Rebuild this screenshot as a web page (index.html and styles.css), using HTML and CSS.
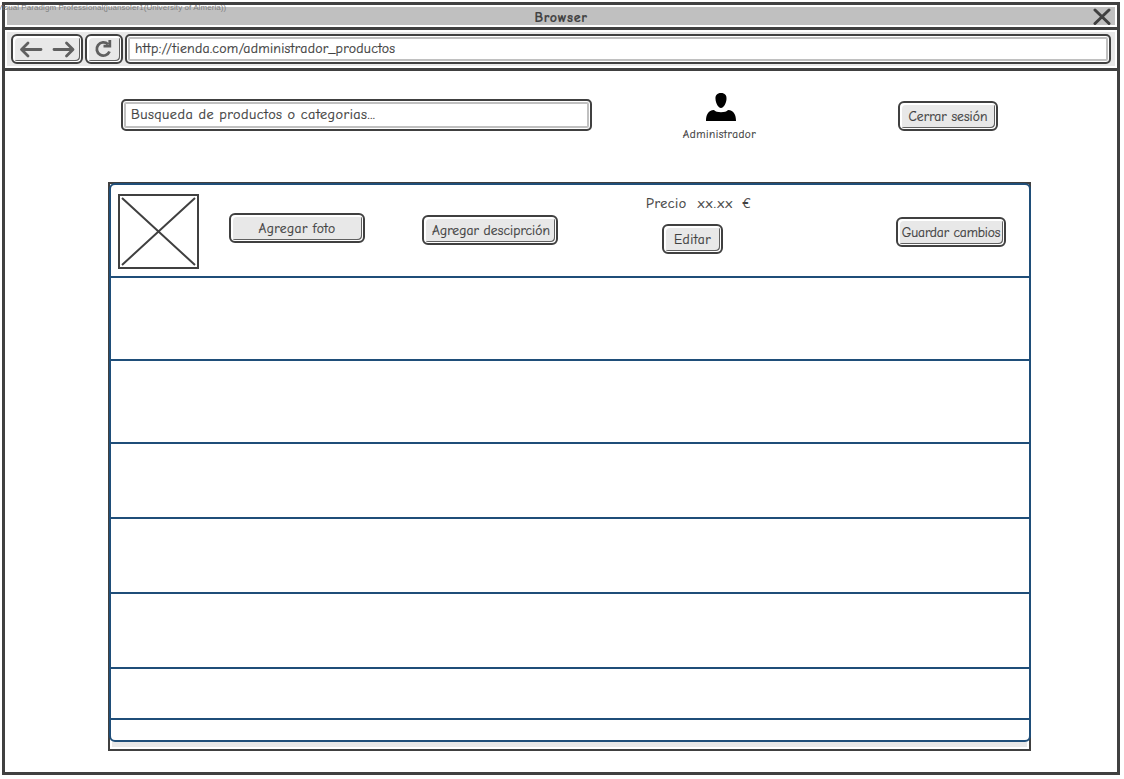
FILE: index.html
```
<!DOCTYPE html>
<html lang="es">
<head>
<meta charset="utf-8">
<title>Administrador de productos</title>
<link rel="stylesheet" href="styles.css">
</head>
<body>
<div class="watermark">Visual Paradigm Professional(juansoler1(University of Almeria))</div>
<div class="window">
  <header class="titlebar"><span class="title">Browser</span>
    <svg class="close" width="18" height="18" viewBox="0 0 18 18"><path d="M2 2L16 15.500M16 2L2 15.500"/></svg>
  </header>
  <nav class="toolbar">
    <div class="button nav">
      <svg width="68" height="26" viewBox="0 0 68 26"><path d="M28 13.500H9M15 7L8.500 13.500L15 20M41 13.500H59M53.500 7L60 13.500L53.500 20"/></svg>
    </div>
    <div class="button reload">
      <svg width="34" height="26" viewBox="0 0 34 26"><path d="M21 8.300A6.600 6.600 0 1 0 22.500 15.500M22.800 4V10.200H16.500"/></svg>
    </div>
    <div class="field url"><span class="t-url">http://tienda.com/administrador_productos</span></div>
  </nav>
  <main>
    <section class="top">
      <div class="field search"><span class="t-search">Busqueda de productos o categorias...</span></div>
      <div class="user">
        <svg width="30" height="29" viewBox="0 0 30 29"><path d="M15 0C11 0 9.200 2.500 9.500 6C9.700 10.500 12.500 15 15 15S20.300 10.500 20.500 6C20.800 2.500 19 0 15 0Z"/><path d="M0 28C0 22 2 17.500 8 17C10 20 20 20 22 17C28 17.500 30 22 30 28Z"/></svg>
        <span class="t-admin">Administrador</span>
      </div>
      <div class="button logout"><span class="t-logout">Cerrar sesión</span></div>
    </section>
    <section class="panel">
      <div class="table">
        <div class="row product">
          <svg class="photo" width="81" height="75" viewBox="0 0 81 75"><path d="M1 1H80V74H1Z"/><path d="M4 4L77 71M77 4L4 71"/></svg>
          <div class="button add-photo"><span class="t-photo">Agregar foto</span></div>
          <div class="button add-desc"><span class="t-desc">Agregar desciprción</span></div>
          <div class="price">
            <div class="amount"><span class="t-price">Precio</span><span class="t-value">xx.xx</span><span class="t-euro">€</span></div>
            <div class="button edit"><span class="t-edit">Editar</span></div>
          </div>
          <div class="button save"><span class="t-save">Guardar cambios</span></div>
        </div>
        <div class="row tall"></div>
        <div class="row tall"></div>
        <div class="row"></div>
        <div class="row"></div>
        <div class="row"></div>
        <div class="row short"></div>
        <div class="row last"></div>
      </div>
      <div class="scroll"></div>
    </section>
  </main>
</div>
</body>
</html>
```
FILE: styles.css
```
* { box-sizing: border-box; }
body { margin: 0; width: 1124px; height: 779px; overflow: hidden; background: #fff; color: #404040; font: 13.5px/20px "Comic Sans MS", "Comic Neue", "Open Sans", sans-serif; padding: 2px; }
svg { display: block; fill: none; stroke: #404040; flex: none; }
span { white-space: nowrap; -webkit-text-stroke: 0.2px #404040; }
.watermark { position: absolute; left: -3px; top: 2px; z-index: 2; color: #808080; font: 8px/11px "Liberation Sans", Arial, sans-serif; white-space: nowrap; letter-spacing: 0.07px; }
.window { width: 1118px; height: 773px; border: 3px solid #404040; }
.titlebar { display: flex; align-items: center; justify-content: center; height: 25px; border-bottom: 3px solid #404040; background: #c0c0c0; box-shadow: inset 0 0 0 2px #fff; padding: 2px 6px 0; }
.titlebar::before { content: ""; width: 18px; }
.title { font-size: 14px; font-weight: 700; margin: 2px 0 0 auto; letter-spacing: 0.65px; }
.close { margin-left: auto; margin-right: 0; stroke-width: 3; stroke-linecap: round; }
.toolbar { display: flex; gap: 2px; height: 41px; border-bottom: 3px solid #404040; background: #e8e8e8; box-shadow: inset 0 0 0 2px #fff; padding: 4px 6px; }
.button { display: flex; align-items: center; justify-content: center; flex: none; height: 30px; border: 2px solid #404040; border-radius: 6px; background: #e8e8e8; box-shadow: inset 0 0 0 1px #fff, inset -1px -1px #fff, inset -2px -2px #606060, inset 2px 2px #fff; }
.nav { width: 72px; }
.reload { width: 38px; }
.nav svg, .reload svg { stroke: #606060; stroke-width: 2.8; stroke-linecap: round; stroke-linejoin: round; }
.reload svg { stroke-linecap: butt; stroke-linejoin: miter; }
.field { display: flex; align-items: center; flex: none; background: #fff; border: 2px solid #404040; border-radius: 5px; box-shadow: inset 0 0 0 1px #fff, inset 0 0 0 3px #c0c0c0; padding-left: 8px; }
.url { width: 986px; height: 30px; padding-bottom: 1px; }
.t-url { font-size: 13.8px; letter-spacing: 0.26px; }
.top { display: flex; height: 111px; padding: 28px 0 0 116px; }
.search { width: 471px; height: 32px; padding-bottom: 1px; }
.t-search { font-size: 14.2px; letter-spacing: 0.47px; }
.user { display: flex; flex-direction: column; align-items: center; width: 100px; margin: -6px 0 0 79px; }
.user svg { fill: #000; stroke: none; }
.t-admin { font-size: 11.2px; line-height: 14px; margin: 6px 3px 0 0; letter-spacing: 0.48px; }
.logout { width: 100px; margin: 2px 0 0 127px; padding-top: 2px; }
.t-logout { letter-spacing: 0.08px; }
.panel { width: 923px; height: 569px; margin-left: 103px; border: 2px solid #404040; }
.table { width: 922px; height: 559px; margin: -1px 0 0 -1px; border: 2px solid #1f4e79; border-radius: 6px; background: #fff; }
.row { height: 75px; border-bottom: 2px solid #1f4e79; }
.product { display: flex; height: 93px; padding: 9px 0 0 7px; }
.tall { height: 83px; }
.short { height: 51px; }
.last { height: 20px; border: 0; }
.photo { stroke-width: 2; }
.add-photo { width: 136px; margin: 19px 0 0 30px; padding-top: 1px; }
.t-photo { letter-spacing: 0.42px; }
.add-desc { width: 136px; margin: 21px 0 0 57px; padding: 1px 0 0 2px; }
.t-desc { letter-spacing: 0.1px; }
.price { width: 106px; margin-left: 87px; }
.amount { display: flex; height: 30px; padding-left: 1px; font-size: 14px; }
.t-price { width: 52px; letter-spacing: 0.55px; }
.t-value { width: 44px; letter-spacing: 1.4px; }
.edit { width: 61px; margin-left: 17px; padding-top: 1px; }
.t-edit { letter-spacing: 0.5px; }
.save { width: 110px; margin: 23px 0 0 145px; padding-top: 1px; }
.t-save { letter-spacing: -0.1px; }
.scroll { height: 5px; margin: 0 2px; background: #e8e8e8; }
```
